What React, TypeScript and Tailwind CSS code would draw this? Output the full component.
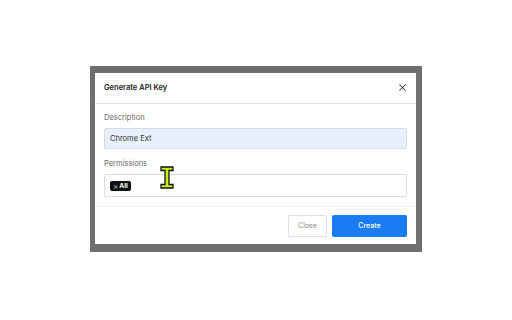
import { X } from 'lucide-react'

function IBeam() {
  return (
    <svg width="14" height="23" viewBox="0 0 14 23" className="absolute left-[160px] top-[166px]">
      <path
        d="M1 1 H13 V4.5 H9 V18.5 H13 V22 H1 V18.5 H5 V4.5 H1 Z"
        fill="#c6ef1a"
        stroke="#111"
        strokeWidth="1.3"
        strokeLinejoin="miter"
      />
    </svg>
  )
}

export default function App() {
  return (
    <main
      className="relative flex h-[320px] w-[512px] items-center justify-center bg-white"
      style={{ fontFamily: 'Inter, "Noto Sans", sans-serif' }}
    >
      <div className="mt-[-2px] bg-[#6f6f6f] pb-[8px] pl-[5px] pr-[6px] pt-[7px]">
        <div className="w-[321px] bg-white">
          <div className="flex h-[31px] items-center justify-between border-b border-[#e3e3e3] pl-[9px] pr-[8px]">
            <h1 className="text-[7.5px] font-semibold text-[#222]">Generate API Key</h1>
            <X size={11} strokeWidth={2.2} className="text-[#333]" />
          </div>

          <div className="px-[9px] pb-[9px] pt-[8px]">
            <p className="text-[7.5px] text-[#666]">Description</p>
            <div className="mt-[5px] flex h-[21px] items-center rounded-[2px] border border-[#d6dbe4] bg-[#e8f0fe] px-[5px] text-[7.5px] text-[#333]">
              Chrome Ext
            </div>

            <p className="mt-[9px] text-[7.5px] text-[#666]">Permissions</p>
            <div className="mt-[5px] flex h-[23px] items-center rounded-[2px] border border-[#dcdcdc] bg-white px-[5px]">
              <span className="flex h-[10px] items-center gap-[1px] rounded-[2px] bg-[#111] px-[3px] text-[6.5px] font-bold leading-none text-white">
                <span className="text-[8px] font-normal leading-none text-[#bbb]">×</span>All
              </span>
            </div>
          </div>

          <div className="flex h-[38px] items-center justify-end gap-[5px] border-t border-[#eeeeee] pr-[9px]">
            <button className="h-[22px] w-[39px] rounded-[2px] border border-[#e0e0e0] bg-white text-[7px] text-[#888]">
              Close
            </button>
            <button className="h-[22px] w-[75px] rounded-[2px] bg-[#1a7cf2] text-[7px] font-medium text-white">
              Create
            </button>
          </div>
        </div>
      </div>
      <IBeam />
    </main>
  )
}
